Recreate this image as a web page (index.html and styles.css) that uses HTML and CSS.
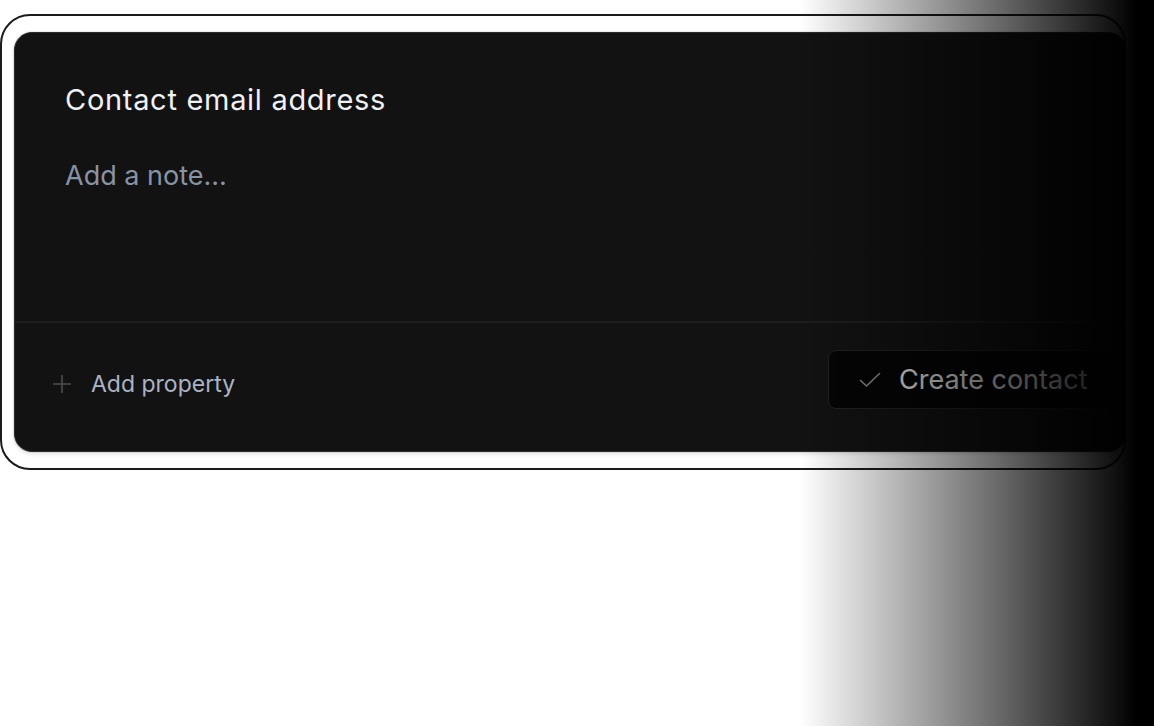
FILE: index.html
```html
<!DOCTYPE html>
<html>
<head>
<meta charset="utf-8">
<link rel="stylesheet" href="styles.css">
</head>
<body>
<div class="frame">
  <div class="card">
    <div class="body">
      <div class="title">Contact email address</div>
      <div class="note">Add a note...</div>
    </div>
    <div class="footer">
      <button class="add">
        <svg class="plus" width="20" height="20" viewBox="0 0 20 20"><path d="M10 1v18M1 10h18" stroke="#4e4e4e" stroke-width="1.6" fill="none"/></svg>
        <span>Add property</span>
      </button>
      <button class="create">
        <svg class="check" width="22" height="16" viewBox="0 0 22 16"><path d="M1.5 8.5l6 5.5L20.5 1.5" stroke="#8a8a8a" stroke-width="1.6" fill="none" stroke-linecap="round" stroke-linejoin="round"/></svg>
        <span>Create contact</span>
      </button>
    </div>
  </div>
</div>
<div class="fade"></div>
</body>
</html>
```

FILE: styles.css
```css
html, body {
  margin: 0;
  padding: 0;
  background: #ffffff;
  font-family: Inter, "Noto Sans", sans-serif;
  width: 1154px;
  height: 726px;
  overflow: hidden;
  position: relative;
}

.frame {
  margin-top: 14px;
  box-sizing: border-box;
  width: 1126px;
  height: 456px;
  border: 2px solid #1b1b1b;
  border-radius: 30px;
  padding: 16px 0 0 12px;
}

.card {
  box-sizing: border-box;
  width: 1112px;
  height: 420px;
  background: #121212;
  border: 1px solid #2a2a2a;
  border-radius: 18px;
  box-shadow: 0 0 0 1px rgba(0,0,0,0.06), 0 2px 4px rgba(0,0,0,0.12);
  display: flex;
  flex-direction: column;
}

.body {
  height: 288px;
  box-sizing: border-box;
  padding: 49px 50px 0 50px;
}

.title {
  font-size: 29px;
  line-height: 36px;
  letter-spacing: 0.7px;
  color: #eff1f4;
  font-weight: 400;
}

.note {
  margin-top: 40px;
  font-size: 27px;
  line-height: 36px;
  color: #8893a5;
}

.footer {
  flex: 1;
  border-top: 2px solid #1e1e1e;
  display: flex;
  align-items: flex-start;
  justify-content: space-between;
  padding: 27px 11px 0 37px;
}

button {
  font-family: inherit;
  background: none;
  border: none;
  padding: 0;
  cursor: pointer;
}

.add {
  display: flex;
  align-items: center;
  gap: 19px;
  margin-top: 19px;
  font-size: 23px;
  line-height: 30px;
  color: #a9b4c6;
}

.create {
  box-sizing: border-box;
  width: 286px;
  height: 59px;
  display: flex;
  align-items: center;
  gap: 18px;
  padding: 0 0 0 30px;
  background: #050505;
  border: 1px solid #222222;
  border-radius: 8px;
  font-size: 27px;
  color: #e6e6e6;
}

.check {
  margin-top: 1px;
}

.fade {
  position: absolute;
  top: 0;
  bottom: 0;
  left: 800px;
  right: 0;
  background: linear-gradient(to right, rgba(0,0,0,0) 0%, rgba(0,0,0,1) 95%);
  pointer-events: none;
}
```
